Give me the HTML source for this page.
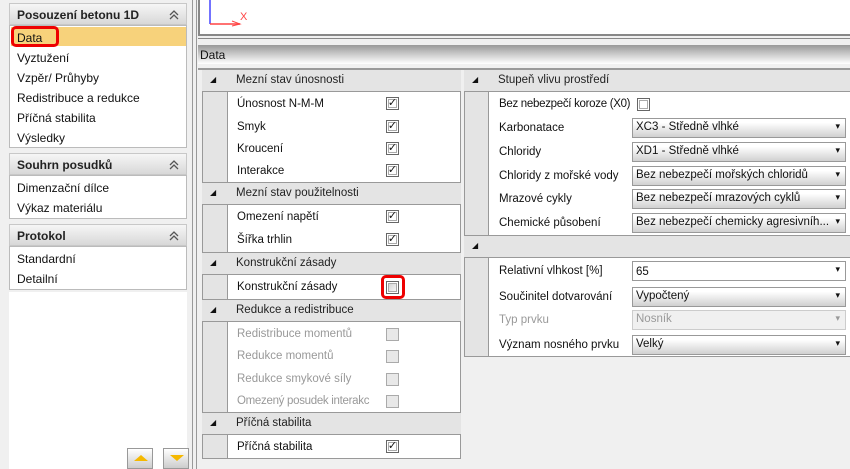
<!DOCTYPE html><html><head><meta charset="utf-8"><style>
*{margin:0;padding:0;box-sizing:border-box}
body{width:850px;height:469px;overflow:hidden;background:#f0f0f0;font-family:"Liberation Sans",sans-serif;font-size:12px;color:#111;position:relative}
.a{position:absolute}
.ph{position:absolute;left:9px;width:178px;height:22px;background:linear-gradient(#f6f6f6,#d8d8d8);border:1px solid #c8c8c8;font-weight:bold;font-size:12px;padding:4px 0 0 7px;color:#222}
.ph svg{position:absolute;right:6px;top:5px}
.pl{position:absolute;left:9px;width:178px;background:#fff;border:1px solid #bbb}
.it{position:absolute;left:8px;font-size:12px}
.gh{position:absolute;background:#e4e4e4;border-top:1px solid #999;border-bottom:1px solid #999;height:23px}
.gh b{position:absolute;left:8px;top:5px;font-size:8px;font-weight:normal}
.gh i{position:absolute;left:34px;top:4px;font-style:normal;color:#222;font-size:11.5px}
.lab{position:absolute;font-size:11.5px}
.dis{color:#999}
.cb{position:absolute;width:13px;height:13px;border:1px solid #666;box-shadow:inset 0 0 0 1px #fff,inset 0 0 0 2px #aaa;background:#fff;font-size:11px;line-height:11px;text-align:center;color:#111}
.cb.d{border-color:#aaa;background:#e8e8e8;box-shadow:none}
.dd{position:absolute;left:632px;width:214px;height:20px;border:1px solid #999;background:linear-gradient(#fff 20%,#d0d0d0);font-size:11.5px;padding:2px 0 0 3px}
.dd:after{content:"▾";position:absolute;right:5px;top:2px;font-size:9px}
.dd.x{background:#f0f0f0;color:#999;border-color:#ccc}
</style></head><body>
<!-- sidebar -->
<div class="ph" style="top:3px">Posouzení betonu 1D<svg width="12" height="12"><path d="M2 6L6 2L10 6M2 10L6 6L10 10" stroke="#555" fill="none" stroke-width="1.3"/></svg></div>
<div class="pl" style="top:25px;height:123px"></div>
<div class="a" style="left:11px;top:27px;width:175px;height:19px;background:#f7d27b"></div>
<div class="a" style="left:11px;top:26px;width:48px;height:21px;border:3px solid #e00;border-radius:5px"></div>
<div class="it" style="top:31px;left:17px">Data</div>
<div class="it" style="top:51px;left:17px">Vyztužení</div>
<div class="it" style="top:71px;left:17px">Vzpěr/ Průhyby</div>
<div class="it" style="top:91px;left:17px">Redistribuce a redukce</div>
<div class="it" style="top:111px;left:17px">Příčná stabilita</div>
<div class="it" style="top:131px;left:17px">Výsledky</div>
<div class="ph" style="top:153px">Souhrn posudků<svg width="12" height="12"><path d="M2 6L6 2L10 6M2 10L6 6L10 10" stroke="#555" fill="none" stroke-width="1.3"/></svg></div>
<div class="pl" style="top:175px;height:44px"></div>
<div class="it" style="top:181px;left:17px">Dimenzační dílce</div>
<div class="it" style="top:201px;left:17px">Výkaz materiálu</div>
<div class="ph" style="top:224px">Protokol<svg width="12" height="12"><path d="M2 6L6 2L10 6M2 10L6 6L10 10" stroke="#555" fill="none" stroke-width="1.3"/></svg></div>
<div class="pl" style="top:246px;height:44px"></div>
<div class="it" style="top:252px;left:17px">Standardní</div>
<div class="it" style="top:272px;left:17px">Detailní</div>
<div class="a" style="left:9px;top:292px;width:178px;height:177px;background:#fff"></div>
<div class="a" style="left:127px;top:448px;width:26px;height:21px;border:1px solid #999;background:linear-gradient(#fff,#ccc)"><div class="a" style="left:6px;top:6px;border-left:7px solid transparent;border-right:7px solid transparent;border-bottom:6px solid #f5b800"></div></div>
<div class="a" style="left:163px;top:448px;width:26px;height:21px;border:1px solid #999;background:linear-gradient(#fff,#ccc)"><div class="a" style="left:6px;top:6px;border-left:7px solid transparent;border-right:7px solid transparent;border-top:6px solid #f5b800"></div></div>
<div class="a" style="left:192px;top:0;width:1px;height:469px;background:#999"></div>
<div class="a" style="left:196px;top:0;width:1px;height:469px;background:#999"></div>
<!-- top viewport -->
<div class="a" style="left:198px;top:0;width:652px;height:35px;background:#fff;border-left:2px solid #888"></div>
<div class="a" style="left:198px;top:34px;width:652px;height:2px;background:#888"></div>
<div class="a" style="left:198px;top:38px;width:652px;height:1px;background:#888"></div>
<svg class="a" style="left:200px;top:0" width="60" height="30"><line x1="10" y1="0" x2="10" y2="24" stroke="#44f" stroke-width="1.5"/><line x1="10" y1="24" x2="40" y2="24" stroke="#f44" stroke-width="1.5"/><path d="M32 21L40 24L32 26" stroke="#f44" fill="none"/><text x="40" y="20" fill="#f44" font-size="11" font-family="Liberation Sans">X</text></svg>
<div class="a" style="left:198px;top:45px;width:652px;height:19px;background:linear-gradient(#999,#fff);padding:3px 0 0 2px;font-size:12px">Data</div>
<div class="a" style="left:198px;top:68px;width:652px;height:2px;background:#999"></div>
<!-- left grid -->
<div class="a" style="left:202px;top:70px;width:259px;height:389px;background:#fff;border-left:1px solid #999;border-right:1px solid #999;border-bottom:1px solid #999"></div>
<div class="a" style="left:203px;top:70px;width:25px;height:388px;background:#e4e4e4;border-right:1px solid #999"></div>
<div class="gh" style="left:202px;top:69px;width:259px"><b>◢</b><i>Mezní stav únosnosti</i></div>
<div class="lab" style="left:237px;top:98px">Únosnost N-M-M</div><div class="cb" style="left:386px;top:97px">✓</div>
<div class="lab" style="left:237px;top:121px">Smyk</div><div class="cb" style="left:386px;top:120px">✓</div>
<div class="lab" style="left:237px;top:143px">Kroucení</div><div class="cb" style="left:386px;top:142px">✓</div>
<div class="lab" style="left:237px;top:165px">Interakce</div><div class="cb" style="left:386px;top:164px">✓</div>
<div class="gh" style="left:202px;top:182px;width:259px"><b>◢</b><i>Mezní stav použitelnosti</i></div>
<div class="lab" style="left:237px;top:211px">Omezení napětí</div><div class="cb" style="left:386px;top:210px">✓</div>
<div class="lab" style="left:237px;top:234px">Šířka trhlin</div><div class="cb" style="left:386px;top:233px">✓</div>
<div class="gh" style="left:202px;top:252px;width:259px"><b>◢</b><i>Konstrukční zásady</i></div>
<div class="lab" style="left:237px;top:281px">Konstrukční zásady</div><div class="cb" style="left:386px;top:281px;background:linear-gradient(135deg,#ccc,#fff)"></div>
<div class="a" style="left:381px;top:275px;width:24px;height:24px;border:3px solid #e00;border-radius:5px"></div>
<div class="gh" style="left:202px;top:299px;width:259px"><b>◢</b><i>Redukce a redistribuce</i></div>
<div class="lab dis" style="left:237px;top:328px">Redistribuce momentů</div><div class="cb d" style="left:386px;top:328px"></div>
<div class="lab dis" style="left:237px;top:350px">Redukce momentů</div><div class="cb d" style="left:386px;top:350px"></div>
<div class="lab dis" style="left:237px;top:373px">Redukce smykové síly</div><div class="cb d" style="left:386px;top:373px"></div>
<div class="lab dis" style="left:237px;top:395px;letter-spacing:-0.3px">Omezený posudek interakc</div><div class="cb d" style="left:386px;top:395px"></div>
<div class="gh" style="left:202px;top:412px;width:259px"><b>◢</b><i>Příčná stabilita</i></div>
<div class="lab" style="left:237px;top:441px">Příčná stabilita</div><div class="cb" style="left:386px;top:440px">✓</div>
<!-- right grid -->
<div class="a" style="left:464px;top:70px;width:386px;height:287px;background:#fff;border-left:1px solid #999;border-bottom:1px solid #999"></div>
<div class="a" style="left:465px;top:70px;width:24px;height:286px;background:#e4e4e4;border-right:1px solid #999"></div>
<div class="gh" style="left:464px;top:69px;width:386px"><b>◢</b><i>Stupeň vlivu prostředí</i></div>
<div class="lab" style="left:499px;top:98px;letter-spacing:-0.3px">Bez nebezpečí koroze (X0)</div><div class="cb" style="left:637px;top:98px"></div>
<div class="lab" style="left:499px;top:122px">Karbonatace</div><div class="dd" style="top:118px">XC3 - Středně vlhké</div>
<div class="lab" style="left:499px;top:146px">Chloridy</div><div class="dd" style="top:142px">XD1 - Středně vlhké</div>
<div class="lab" style="left:499px;top:170px">Chloridy z mořské vody</div><div class="dd" style="top:166px">Bez nebezpečí mořských chloridů</div>
<div class="lab" style="left:499px;top:193px">Mrazové cykly</div><div class="dd" style="top:189px">Bez nebezpečí mrazových cyklů</div>
<div class="lab" style="left:499px;top:217px">Chemické působení</div><div class="dd" style="top:213px">Bez nebezpečí chemicky agresivníh...</div>
<div class="gh" style="left:464px;top:235px;width:386px"><b>◢</b></div>
<div class="lab" style="left:499px;top:265px">Relativní vlhkost [%]</div><div class="dd" style="top:261px;background:#fff;padding-top:4px">65</div>
<div class="lab" style="left:499px;top:291px">Součinitel dotvarování</div><div class="dd" style="top:287px">Vypočtený</div>
<div class="lab dis" style="left:499px;top:314px">Typ prvku</div><div class="dd x" style="top:310px">Nosník</div>
<div class="lab" style="left:499px;top:339px">Význam nosného prvku</div><div class="dd" style="top:335px">Velký</div>
</body></html>
